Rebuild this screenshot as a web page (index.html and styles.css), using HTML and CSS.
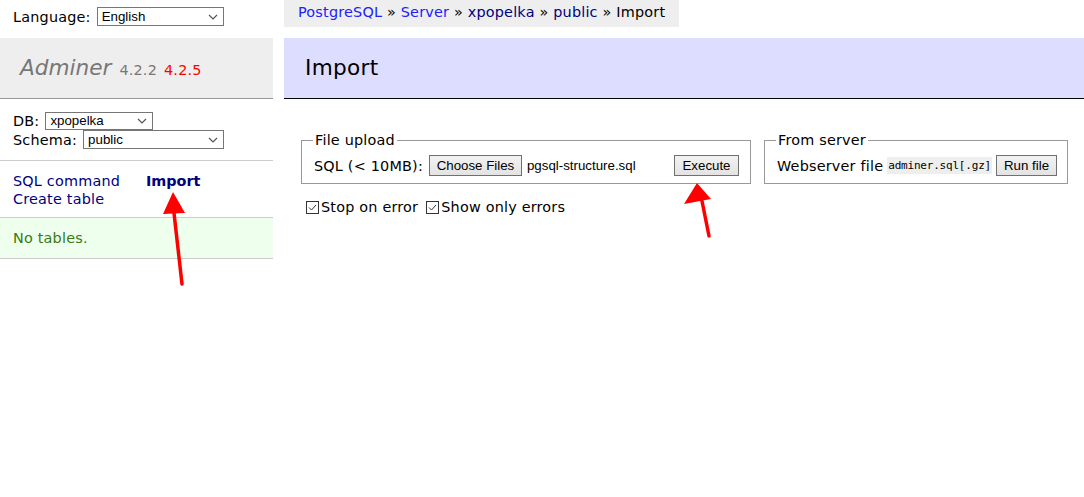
FILE: index.html
```html
<!DOCTYPE html>
<html lang="en">
<head>
<meta charset="utf-8">
<title>Import - Adminer</title>
<link rel="stylesheet" href="styles.css">
</head>
<body>
<div class="page">
  <aside class="menu">
    <form class="lang">
      <label>Language: <span class="select lang-select">English<svg class="chev" viewBox="0 0 10 6" width="10" height="6"><path d="M1 1l4 4 4-4" fill="none" stroke="#555" stroke-width="1.2"/></svg></span></label>
    </form>
    <h1 class="logo"><a class="logo-name">Adminer</a> <span class="version">4.2.2</span> <a class="new-version">4.2.5</a></h1>
    <div class="dbs">
      <div class="db-row">DB: <span class="select db-select">xpopelka<svg class="chev" viewBox="0 0 10 6" width="10" height="6"><path d="M1 1l4 4 4-4" fill="none" stroke="#555" stroke-width="1.2"/></svg></span></div>
      <div class="db-row">Schema: <span class="select schema-select">public<svg class="chev" viewBox="0 0 10 6" width="10" height="6"><path d="M1 1l4 4 4-4" fill="none" stroke="#555" stroke-width="1.2"/></svg></span></div>
    </div>
    <p class="links"><a class="visited">SQL command</a> <a class="active">Import</a><br><a class="visited">Create table</a></p>
    <p class="message">No tables.</p>
  </aside>
  <main class="content">
    <div class="breadcrumb"><a class="link">PostgreSQL</a> » <a class="link">Server</a> » <a class="visited">xpopelka</a> » <a class="visited">public</a> » Import</div>
    <h2 class="title">Import</h2>
    <form class="import-form">
      <div class="fieldsets">
        <fieldset class="box upload">
          <legend>File upload</legend>
          <div class="box-row">
            <span class="label">SQL (&lt; 10MB):</span>
            <span class="btn choose">Choose Files</span>
            <span class="file-name">pgsql-structure.sql</span>
            <span class="btn execute">Execute</span>
          </div>
        </fieldset>
        <fieldset class="box server">
          <legend>From server</legend>
          <div class="box-row">
            <span class="label">Webserver file</span>
            <code class="code">adminer.sql[.gz]</code>
            <span class="btn run">Run file</span>
          </div>
        </fieldset>
      </div>
      <p class="checks">
        <label class="check"><svg class="cb" viewBox="0 0 13 13" width="13" height="13"><rect x="0.5" y="0.5" width="12" height="12" fill="#fff" stroke="#333"/><path d="M3 6.5l2.5 2.5 4.5-5" fill="none" stroke="#333" stroke-width="1"/></svg>Stop on error</label>
        <label class="check"><svg class="cb" viewBox="0 0 13 13" width="13" height="13"><rect x="0.5" y="0.5" width="12" height="12" fill="#fff" stroke="#333"/><path d="M3 6.5l2.5 2.5 4.5-5" fill="none" stroke="#333" stroke-width="1"/></svg>Show only errors</label>
      </p>
    </form>
  </main>
</div>
<svg class="arrow arrow-import" width="40" height="100" viewBox="0 0 40 100">
  <path d="M22 21 L30 92" stroke="#f00" stroke-width="3.5" fill="none" stroke-linecap="round"/>
  <polygon points="21,0 11,22 33,21" fill="#f00"/>
</svg>
<svg class="arrow arrow-execute" width="40" height="60" viewBox="0 0 40 60">
  <path d="M21 18 L28 53" stroke="#f00" stroke-width="3.5" fill="none" stroke-linecap="round"/>
  <polygon points="16,0 3,21 30,16" fill="#f00"/>
</svg>
</body>
</html>
```

FILE: styles.css
```css
* { box-sizing: border-box; }
html, body { margin: 0; padding: 0; background: #fff; }
body {
  font: 14.4px/18px "DejaVu Sans", Verdana, sans-serif;
  letter-spacing: 0.2px;
  color: #000;
  position: relative;
  width: 1084px;
  height: 497px;
  overflow: hidden;
}
a { text-decoration: none; color: blue; }
.visited { color: navy; }
.link { color: #2020ff; }

.page { display: flex; gap: 11px; }

.menu { width: 273px; flex: none; }
.lang { height: 38px; padding: 7px 13px 0; }
.lang label { display: flex; align-items: center; gap: 6px; }

.select {
  display: inline-flex;
  align-items: center;
  justify-content: space-between;
  border: 1px solid #767676;
  background: #fff;
  font: 13.3px/1 "Liberation Sans", Arial, sans-serif;
  letter-spacing: 0;
  color: #000;
  height: 19px;
  padding: 0 5px 0 4px;
  flex: none;
}
.lang-select { width: 127px; height: 19px; }
.db-select { width: 108px; height: 18px; }
.schema-select { width: 141px; height: 19px; }
.chev { flex: none; }

.logo {
  margin: 0;
  height: 61px;
  padding: 0 0 0 20px;
  display: flex;
  align-items: center;
  background: #eee;
  border-bottom: 1px solid #999;
  font-weight: normal;
  font-size: 21.6px;
  color: #777;
}
.logo-name { color: #777; font-style: italic; font-size: 21.6px; letter-spacing: 0; }
.version { font-size: 14.4px; color: #777; padding-top: 3px; margin-left: 8px; }
.new-version { font-size: 14.4px; color: #f00; padding-top: 3px; margin-left: 7px; }

.dbs { padding: 12px 13px 11px; border-bottom: 1px solid #ccc; }
.db-row { display: flex; align-items: center; gap: 6px; height: 19px; }

.links { margin: 0; padding: 11px 13px 9px; border-bottom: 1px solid #ccc; }
.links a { white-space: nowrap; margin-right: 21px; }
.links .active { color: navy; font-weight: bold; letter-spacing: 0; }

.message {
  margin: 0;
  padding: 11px 13px 11px;
  background: #efe;
  color: #3a7a10;
  border-bottom: 1px solid #ccc;
}

.content { flex: 1; min-width: 0; }
.breadcrumb {
  display: inline-block;
  background: #eee;
  height: 27px;
  line-height: 25px;
  padding: 0 14px;
  white-space: nowrap;
  color: #000;
}
.title {
  margin: 11px 0 0;
  height: 61px;
  padding: 0 21px;
  display: flex;
  align-items: center;
  background: #ddf;
  border-bottom: 1px solid #000;
  font-weight: normal;
  font-size: 21.6px;
  letter-spacing: 0.3px;
  color: #000;
}
.import-form { padding: 32px 0 0 17px; }
.fieldsets { display: flex; gap: 13px; align-items: flex-start; }
.box {
  margin: 0;
  padding: 0 11px 7px 12px;
  border: 1px solid #999;
  min-width: 0;
}
.box legend { padding: 0 2px; margin-left: -1px; line-height: 18px; }
.upload { width: 450px; }
.server { width: 304px; }
.box-row { display: flex; align-items: center; height: 27px; padding-top: 6px; white-space: nowrap; }
.label { flex: none; }

.btn {
  display: inline-flex;
  align-items: center;
  justify-content: center;
  flex: none;
  white-space: nowrap;
  height: 21px;
  border: 1px solid #707070;
  background: linear-gradient(#f2f2f2, #e3e3e3);
  font: 13.3px/1 "Liberation Sans", Arial, sans-serif;
  letter-spacing: 0;
  color: #000;
  padding: 0 7px;
}
.choose { margin-left: 6px; width: 93px; }
.file-name { font: 13.3px/1 "Liberation Sans", Arial, sans-serif; letter-spacing: 0; margin-left: 5px; flex: 1; }
.execute { width: 65px; }
.code {
  flex: none;
  font: 11px/1 "DejaVu Sans Mono", "Liberation Mono", monospace;
  background: #eee;
  padding: 3px 1px;
  margin-left: 4px;
  letter-spacing: -0.2px;
}
.run { margin-left: 4px; width: 61px; }

.checks { margin: 14px 0 0; display: flex; gap: 8px; padding-left: 5px; }
.check { display: inline-flex; align-items: center; gap: 2px; }
.cb { flex: none; }

.arrow { position: absolute; }
.arrow-import { left: 152px; top: 192px; }
.arrow-execute { left: 681px; top: 183px; }
```
